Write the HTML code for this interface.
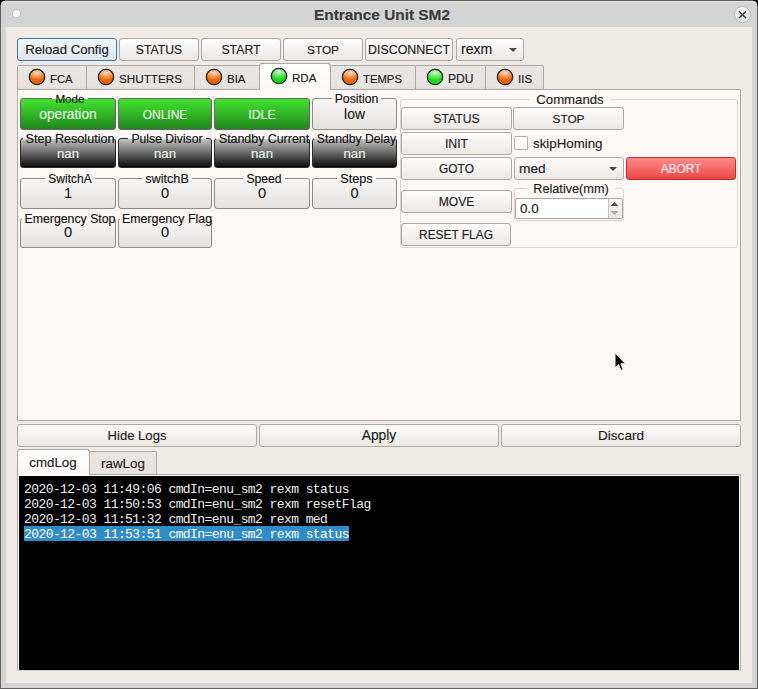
<!DOCTYPE html>
<html><head><meta charset="utf-8">
<style>
*{box-sizing:border-box;margin:0;padding:0}
html,body{width:758px;height:689px;overflow:hidden;background:#626262;font-family:"Liberation Sans",sans-serif;color:#1c1c1c}
.a{position:absolute}
.t{line-height:normal;white-space:nowrap;-webkit-text-stroke:0.15px currentColor}
.log{font-family:"Liberation Mono",monospace;font-size:13px;letter-spacing:-0.58px;-webkit-text-stroke:0}
</style></head><body>
<div class="a" style="left:0px;top:0px;width:5px;height:5px;background:#000"></div>
<div class="a" style="left:753px;top:0px;width:5px;height:5px;background:#000"></div>
<div class="a" style="left:1px;top:1px;width:756px;height:687px;background:#d4d4d4;border-radius:4px 4px 0 0;box-shadow:inset 0 1px 0 #e4e4e4"></div>
<div class="a" style="left:6px;top:27px;width:746px;height:656px;background:#efebe7"></div>
<div class="a" style="left:12.5px;top:10.3px;width:7px;height:7px;border-radius:50%;background:#f8f8f8;box-shadow:0 0 0 1px #c4c4c4"></div>
<div class="a" style="left:734px;top:6px;width:17px;height:17px;border-radius:50%;background:linear-gradient(#f4f4f4,#dedede);border:1px solid #bcbcbc"></div>
<svg class="a" style="left:734px;top:6px" width="17" height="17" viewBox="0 0 17 17"><path d="M5 5.2 L12 12 M12 5.2 L5 12" stroke="#3c3c3c" stroke-width="1.35"/></svg>
<div class="a" style="left:17px;top:38px;width:100px;height:23px;border:1px solid #3a78a8;border-radius:3px;background:linear-gradient(#f3f6f9,#dfe5ea)"></div>
<div class="a" style="left:119px;top:38px;width:80px;height:23px;border:1px solid #aba8a5;border-radius:3px;background:linear-gradient(#fdfdfd,#ebe8e5);"></div>
<div class="a" style="left:201px;top:38px;width:80px;height:23px;border:1px solid #aba8a5;border-radius:3px;background:linear-gradient(#fdfdfd,#ebe8e5);"></div>
<div class="a" style="left:283px;top:38px;width:80px;height:23px;border:1px solid #aba8a5;border-radius:3px;background:linear-gradient(#fdfdfd,#ebe8e5);"></div>
<div class="a" style="left:365px;top:38px;width:88px;height:23px;border:1px solid #aba8a5;border-radius:3px;background:linear-gradient(#fdfdfd,#ebe8e5);"></div>
<div class="a" style="left:456px;top:38px;width:68px;height:23px;border:1px solid #aba8a5;border-radius:3px;background:linear-gradient(#fdfdfd,#ebe8e5);"></div>
<svg class="a" style="left:509px;top:48px" width="9" height="5"><path d="M0 0 L8 0 L4 4 Z" fill="#4a4a4a"/></svg>
<div class="a" style="left:17px;top:65px;width:70px;height:25px;border:1px solid #aba8a5;border-bottom:none;border-radius:2px 2px 0 0;background:linear-gradient(#e9e6e3 0,#e6e3e0 85%,#dcd9d6 100%)"></div>
<div class="a" style="left:86px;top:65px;width:109px;height:25px;border:1px solid #aba8a5;border-bottom:none;border-radius:2px 2px 0 0;background:linear-gradient(#e9e6e3 0,#e6e3e0 85%,#dcd9d6 100%)"></div>
<div class="a" style="left:194px;top:65px;width:66px;height:25px;border:1px solid #aba8a5;border-bottom:none;border-radius:2px 2px 0 0;background:linear-gradient(#e9e6e3 0,#e6e3e0 85%,#dcd9d6 100%)"></div>
<div class="a" style="left:330px;top:65px;width:86px;height:25px;border:1px solid #aba8a5;border-bottom:none;border-radius:2px 2px 0 0;background:linear-gradient(#e9e6e3 0,#e6e3e0 85%,#dcd9d6 100%)"></div>
<div class="a" style="left:415px;top:65px;width:71px;height:25px;border:1px solid #aba8a5;border-bottom:none;border-radius:2px 2px 0 0;background:linear-gradient(#e9e6e3 0,#e6e3e0 85%,#dcd9d6 100%)"></div>
<div class="a" style="left:485px;top:65px;width:59px;height:25px;border:1px solid #aba8a5;border-bottom:none;border-radius:2px 2px 0 0;background:linear-gradient(#e9e6e3 0,#e6e3e0 85%,#dcd9d6 100%)"></div>
<div class="a" style="left:17px;top:89px;width:724px;height:332px;border:1px solid #aba8a5;background:#fbf8f5;box-shadow:inset 0 0 0 1px rgba(255,255,255,.3)"></div>
<div class="a" style="left:259px;top:63px;width:72px;height:27px;border:1px solid #aba8a5;border-bottom:none;border-radius:3px 3px 0 0;background:linear-gradient(#ffffff,#fbf8f5)"></div>
<div class="a" style="left:29px;top:69px;width:16px;height:16px;border-radius:50%;background:radial-gradient(ellipse 75% 55% at 50% 18%,rgba(255,228,205,.95) 0,rgba(255,255,255,0) 100%),#ee6200;box-shadow:0 0 0 0.3px #202020;border:1.3px solid #262626"></div>
<div class="a" style="left:98px;top:69px;width:16px;height:16px;border-radius:50%;background:radial-gradient(ellipse 75% 55% at 50% 18%,rgba(255,228,205,.95) 0,rgba(255,255,255,0) 100%),#ee6200;box-shadow:0 0 0 0.3px #202020;border:1.3px solid #262626"></div>
<div class="a" style="left:206px;top:69px;width:16px;height:16px;border-radius:50%;background:radial-gradient(ellipse 75% 55% at 50% 18%,rgba(255,228,205,.95) 0,rgba(255,255,255,0) 100%),#ee6200;box-shadow:0 0 0 0.3px #202020;border:1.3px solid #262626"></div>
<div class="a" style="left:342px;top:69px;width:16px;height:16px;border-radius:50%;background:radial-gradient(ellipse 75% 55% at 50% 18%,rgba(255,228,205,.95) 0,rgba(255,255,255,0) 100%),#ee6200;box-shadow:0 0 0 0.3px #202020;border:1.3px solid #262626"></div>
<div class="a" style="left:427px;top:69px;width:16px;height:16px;border-radius:50%;background:radial-gradient(ellipse 75% 55% at 50% 18%,rgba(215,255,215,.95) 0,rgba(255,255,255,0) 100%),#18dc18;box-shadow:0 0 0 0.3px #202020;border:1.3px solid #262626"></div>
<div class="a" style="left:497px;top:69px;width:16px;height:16px;border-radius:50%;background:radial-gradient(ellipse 75% 55% at 50% 18%,rgba(255,228,205,.95) 0,rgba(255,255,255,0) 100%),#ee6200;box-shadow:0 0 0 0.3px #202020;border:1.3px solid #262626"></div>
<div class="a" style="left:271px;top:68px;width:16px;height:16px;border-radius:50%;background:radial-gradient(ellipse 75% 55% at 50% 18%,rgba(215,255,215,.95) 0,rgba(255,255,255,0) 100%),#18dc18;box-shadow:0 0 0 0.3px #202020;border:1.3px solid #262626"></div>
<div class="a" style="left:20px;top:98px;width:96px;height:32px;border:1px solid #6c5e6c;border-radius:3px;background:linear-gradient(#42e42f,#1f861b)"></div>
<div class="a" style="left:118px;top:98px;width:94px;height:32px;border:1px solid #6c5e6c;border-radius:3px;background:linear-gradient(#42e42f,#1f861b)"></div>
<div class="a" style="left:214px;top:98px;width:96px;height:32px;border:1px solid #6c5e6c;border-radius:3px;background:linear-gradient(#42e42f,#1f861b)"></div>
<div class="a" style="left:312px;top:98px;width:85px;height:32px;border:1px solid #8e8b88;border-radius:3px;background:linear-gradient(#f8f7f6,#e4e2df)"></div>
<div class="a" style="left:20px;top:138px;width:96px;height:30px;border:1px solid #2a2a2a;border-radius:3px;background:linear-gradient(#c4c4c4,#0a0a0a)"></div>
<div class="a" style="left:118px;top:138px;width:94px;height:30px;border:1px solid #2a2a2a;border-radius:3px;background:linear-gradient(#c4c4c4,#0a0a0a)"></div>
<div class="a" style="left:214px;top:138px;width:96px;height:30px;border:1px solid #2a2a2a;border-radius:3px;background:linear-gradient(#c4c4c4,#0a0a0a)"></div>
<div class="a" style="left:312px;top:138px;width:85px;height:30px;border:1px solid #2a2a2a;border-radius:3px;background:linear-gradient(#c4c4c4,#0a0a0a)"></div>
<div class="a" style="left:20px;top:178px;width:96px;height:31px;border:1px solid #8e8b88;border-radius:3px;background:linear-gradient(#f8f7f6,#e4e2df)"></div>
<div class="a" style="left:118px;top:178px;width:94px;height:31px;border:1px solid #8e8b88;border-radius:3px;background:linear-gradient(#f8f7f6,#e4e2df)"></div>
<div class="a" style="left:214px;top:178px;width:96px;height:31px;border:1px solid #8e8b88;border-radius:3px;background:linear-gradient(#f8f7f6,#e4e2df)"></div>
<div class="a" style="left:312px;top:178px;width:85px;height:31px;border:1px solid #8e8b88;border-radius:3px;background:linear-gradient(#f8f7f6,#e4e2df)"></div>
<div class="a" style="left:20px;top:218px;width:96px;height:30px;border:1px solid #8e8b88;border-radius:3px;background:linear-gradient(#f8f7f6,#e4e2df)"></div>
<div class="a" style="left:118px;top:218px;width:94px;height:30px;border:1px solid #8e8b88;border-radius:3px;background:linear-gradient(#f8f7f6,#e4e2df)"></div>
<div class="a" style="left:400px;top:99px;width:338px;height:149px;border:1px solid #d8d5d2;border-radius:3px"></div>
<div class="a" style="left:401px;top:107px;width:111px;height:23px;border:1px solid #aba8a5;border-radius:3px;background:linear-gradient(#fdfdfd,#ebe8e5);"></div>
<div class="a" style="left:513px;top:107px;width:111px;height:23px;border:1px solid #aba8a5;border-radius:3px;background:linear-gradient(#fdfdfd,#ebe8e5);"></div>
<div class="a" style="left:401px;top:132px;width:111px;height:23px;border:1px solid #aba8a5;border-radius:3px;background:linear-gradient(#fdfdfd,#ebe8e5);"></div>
<div class="a" style="left:401px;top:157px;width:111px;height:23px;border:1px solid #aba8a5;border-radius:3px;background:linear-gradient(#fdfdfd,#ebe8e5);"></div>
<div class="a" style="left:401px;top:190px;width:111px;height:23px;border:1px solid #aba8a5;border-radius:3px;background:linear-gradient(#fdfdfd,#ebe8e5);"></div>
<div class="a" style="left:401px;top:223px;width:110px;height:23px;border:1px solid #aba8a5;border-radius:3px;background:linear-gradient(#fdfdfd,#ebe8e5);"></div>
<div class="a" style="left:514px;top:136px;width:14px;height:14px;border:1px solid #b6b2ae;border-radius:1px;background:#fff"></div>
<div class="a" style="left:514px;top:157px;width:110px;height:23px;border:1px solid #aba8a5;border-radius:3px;background:linear-gradient(#fdfdfd,#ebe8e5);"></div>
<svg class="a" style="left:609px;top:167px" width="9" height="5"><path d="M0 0 L8 0 L4 4 Z" fill="#4a4a4a"/></svg>
<div class="a" style="left:626px;top:157px;width:110px;height:23px;border:1px solid #c22a2a;border-radius:3px;background:linear-gradient(#ff8a8a,#ec4646)"></div>
<div class="a" style="left:514px;top:188px;width:110px;height:33px;border:1px solid #d8d5d2;border-radius:3px"></div>
<div class="a" style="left:515px;top:198px;width:108px;height:21px;border:1px solid #aba8a5;border-radius:2px;background:#fff"></div>
<div class="a" style="left:608px;top:199px;width:14px;height:19px;border-left:1px solid #c4c1be;border-radius:0 2px 2px 0;background:linear-gradient(#f8f7f6,#e9e6e3)"></div>
<svg class="a" style="left:610px;top:201px" width="10" height="15"><path d="M0.5 5 L8.5 5 L4.5 1 Z" fill="#585858"/><path d="M0.5 10 L8.5 10 L4.5 14 Z" fill="#a8a8a8"/></svg>
<div class="a" style="left:17px;top:424px;width:240px;height:23px;border:1px solid #aba8a5;border-radius:3px;background:linear-gradient(#fdfdfd,#ebe8e5);"></div>
<div class="a" style="left:259px;top:424px;width:240px;height:23px;border:1px solid #aba8a5;border-radius:3px;background:linear-gradient(#fdfdfd,#ebe8e5);"></div>
<div class="a" style="left:501px;top:424px;width:240px;height:23px;border:1px solid #aba8a5;border-radius:3px;background:linear-gradient(#fdfdfd,#ebe8e5);"></div>
<div class="a" style="left:89px;top:451px;width:68px;height:25px;border:1px solid #aba8a5;border-bottom:none;border-radius:2px 2px 0 0;background:linear-gradient(#e9e6e3 0,#e6e3e0 85%,#dcd9d6 100%)"></div>
<div class="a" style="left:17px;top:474px;width:724px;height:197px;border:1px solid #aba8a5;border-bottom-color:#d4d1ce;background:#000;box-shadow:inset 1px 1px 0 #fff,inset -1px 0 0 #fff"></div>
<div class="a" style="left:17px;top:449px;width:73px;height:26px;border:1px solid #aba8a5;border-bottom:none;border-radius:3px 3px 0 0;background:linear-gradient(#ffffff,#fbf8f5)"></div>
<div class="a" style="left:24px;top:526px;width:325px;height:15px;background:#308cc6"></div>
<svg class="a" style="left:614px;top:352px" width="13" height="20" viewBox="0 0 13 20"><path d="M1 1 L1 16 L4.5 12.5 L7 18.5 L9.2 17.5 L6.8 11.8 L11.5 11.8 Z" fill="#000" stroke="#fff" stroke-width="1"/></svg>
<div class="a t" style="top:6px;font-size:15.4px;color:#3b3b3b;font-weight:bold;left:232px;width:300px;text-align:center;">Entrance Unit SM2</div>
<div class="a t" style="top:42px;font-size:13.2px;color:#1c1c1c;font-weight:normal;left:-83px;width:300px;text-align:center;">Reload Config</div>
<div class="a t" style="top:43px;font-size:12.2px;color:#1c1c1c;font-weight:normal;left:9.0px;width:300px;text-align:center;">STATUS</div>
<div class="a t" style="top:43px;font-size:12.3px;color:#1c1c1c;font-weight:normal;left:91.0px;width:300px;text-align:center;">START</div>
<div class="a t" style="top:43px;font-size:11.8px;color:#1c1c1c;font-weight:normal;left:173.0px;width:300px;text-align:center;">STOP</div>
<div class="a t" style="top:43px;font-size:12.4px;color:#1c1c1c;font-weight:normal;left:259.0px;width:300px;text-align:center;">DISCONNECT</div>
<div class="a t" style="top:41px;font-size:14.1px;color:#1c1c1c;font-weight:normal;left:461px;">rexm</div>
<div class="a t" style="top:73px;font-size:11.3px;color:#1c1c1c;font-weight:normal;left:50px;">FCA</div>
<div class="a t" style="top:72px;font-size:11.7px;color:#1c1c1c;font-weight:normal;left:119px;">SHUTTERS</div>
<div class="a t" style="top:73px;font-size:11.5px;color:#1c1c1c;font-weight:normal;left:227px;">BIA</div>
<div class="a t" style="top:73px;font-size:11.3px;color:#1c1c1c;font-weight:normal;left:363px;">TEMPS</div>
<div class="a t" style="top:72px;font-size:12.1px;color:#1c1c1c;font-weight:normal;left:448px;">PDU</div>
<div class="a t" style="top:72px;font-size:11.6px;color:#1c1c1c;font-weight:normal;left:518px;">IIS</div>
<div class="a t" style="top:71px;font-size:11.6px;color:#1c1c1c;font-weight:normal;left:292px;">RDA</div>
<div class="a t" style="top:107px;font-size:13.8px;color:#eaf6ea;font-weight:normal;left:-82.0px;width:300px;text-align:center;">operation</div>
<div class="a t" style="top:92px;font-size:11.7px;color:#111;font-weight:normal;left:-80.0px;width:300px;text-align:center;"><span style="padding:0 3px;background:linear-gradient(#fbf8f5 0,#fbf8f5 7px,transparent 7px)">Mode</span></div>
<div class="a t" style="top:108px;font-size:12.0px;color:#eaf6ea;font-weight:normal;left:15.0px;width:300px;text-align:center;">ONLINE</div>
<div class="a t" style="top:108px;font-size:12.4px;color:#eaf6ea;font-weight:normal;left:112.0px;width:300px;text-align:center;">IDLE</div>
<div class="a t" style="top:106px;font-size:13.9px;color:#1c1c1c;font-weight:normal;left:204.5px;width:300px;text-align:center;">low</div>
<div class="a t" style="top:92px;font-size:12.3px;color:#111;font-weight:normal;left:206.5px;width:300px;text-align:center;"><span style="padding:0 3px;background:linear-gradient(#fbf8f5 0,#fbf8f5 7px,transparent 7px)">Position</span></div>
<div class="a t" style="top:146px;font-size:13.2px;color:#eaf6ea;font-weight:normal;left:-82.0px;width:300px;text-align:center;">nan</div>
<div class="a t" style="top:132px;font-size:12.6px;color:#111;font-weight:normal;left:-80.0px;width:300px;text-align:center;"><span style="padding:0 3px;background:linear-gradient(#fbf8f5 0,#fbf8f5 7px,transparent 7px)">Step Resolution</span></div>
<div class="a t" style="top:146px;font-size:13.2px;color:#eaf6ea;font-weight:normal;left:15.0px;width:300px;text-align:center;">nan</div>
<div class="a t" style="top:132px;font-size:12.2px;color:#111;font-weight:normal;left:17.0px;width:300px;text-align:center;"><span style="padding:0 3px;background:linear-gradient(#fbf8f5 0,#fbf8f5 7px,transparent 7px)">Pulse Divisor</span></div>
<div class="a t" style="top:146px;font-size:13.2px;color:#eaf6ea;font-weight:normal;left:112.0px;width:300px;text-align:center;">nan</div>
<div class="a t" style="top:132px;font-size:12.4px;color:#111;font-weight:normal;left:114.0px;width:300px;text-align:center;"><span style="padding:0 3px;background:linear-gradient(#fbf8f5 0,#fbf8f5 7px,transparent 7px)">Standby Current</span></div>
<div class="a t" style="top:146px;font-size:13.2px;color:#eaf6ea;font-weight:normal;left:204.5px;width:300px;text-align:center;">nan</div>
<div class="a t" style="top:132px;font-size:12.2px;color:#111;font-weight:normal;left:206.5px;width:300px;text-align:center;"><span style="padding:0 3px;background:linear-gradient(#fbf8f5 0,#fbf8f5 7px,transparent 7px)">Standby Delay</span></div>
<div class="a t" style="top:185px;font-size:13.9px;color:#1c1c1c;font-weight:normal;left:-82.0px;width:300px;text-align:center;">1</div>
<div class="a t" style="top:172px;font-size:12.0px;color:#111;font-weight:normal;left:-80.0px;width:300px;text-align:center;"><span style="padding:0 3px;background:linear-gradient(#fbf8f5 0,#fbf8f5 7px,transparent 7px)">SwitchA</span></div>
<div class="a t" style="top:185px;font-size:14.6px;color:#1c1c1c;font-weight:normal;left:15.0px;width:300px;text-align:center;">0</div>
<div class="a t" style="top:172px;font-size:12.7px;color:#111;font-weight:normal;left:17.0px;width:300px;text-align:center;"><span style="padding:0 3px;background:linear-gradient(#fbf8f5 0,#fbf8f5 7px,transparent 7px)">switchB</span></div>
<div class="a t" style="top:185px;font-size:14.6px;color:#1c1c1c;font-weight:normal;left:112.0px;width:300px;text-align:center;">0</div>
<div class="a t" style="top:172px;font-size:12.2px;color:#111;font-weight:normal;left:114.0px;width:300px;text-align:center;"><span style="padding:0 3px;background:linear-gradient(#fbf8f5 0,#fbf8f5 7px,transparent 7px)">Speed</span></div>
<div class="a t" style="top:185px;font-size:14.6px;color:#1c1c1c;font-weight:normal;left:204.5px;width:300px;text-align:center;">0</div>
<div class="a t" style="top:172px;font-size:12.7px;color:#111;font-weight:normal;left:206.5px;width:300px;text-align:center;"><span style="padding:0 3px;background:linear-gradient(#fbf8f5 0,#fbf8f5 7px,transparent 7px)">Steps</span></div>
<div class="a t" style="top:224px;font-size:14.6px;color:#1c1c1c;font-weight:normal;left:-82.0px;width:300px;text-align:center;">0</div>
<div class="a t" style="top:212px;font-size:12.3px;color:#111;font-weight:normal;left:-80.0px;width:300px;text-align:center;"><span style="padding:0 3px;background:linear-gradient(#fbf8f5 0,#fbf8f5 7px,transparent 7px)">Emergency Stop</span></div>
<div class="a t" style="top:224px;font-size:14.6px;color:#1c1c1c;font-weight:normal;left:15.0px;width:300px;text-align:center;">0</div>
<div class="a t" style="top:212px;font-size:12.4px;color:#111;font-weight:normal;left:17.0px;width:300px;text-align:center;"><span style="padding:0 3px;background:linear-gradient(#fbf8f5 0,#fbf8f5 7px,transparent 7px)">Emergency Flag</span></div>
<div class="a t" style="top:92px;font-size:13.2px;color:#1c1c1c;font-weight:normal;left:420px;width:300px;text-align:center;"><span style="padding:0 6px;background:linear-gradient(#fbf8f5 0,#fbf8f5 8px,transparent 8px)">Commands</span></div>
<div class="a t" style="top:112px;font-size:12.2px;color:#1c1c1c;font-weight:normal;left:306.5px;width:300px;text-align:center;">STATUS</div>
<div class="a t" style="top:112px;font-size:11.8px;color:#1c1c1c;font-weight:normal;left:418.5px;width:300px;text-align:center;">STOP</div>
<div class="a t" style="top:137px;font-size:12.3px;color:#1c1c1c;font-weight:normal;left:306.5px;width:300px;text-align:center;">INIT</div>
<div class="a t" style="top:162px;font-size:11.9px;color:#1c1c1c;font-weight:normal;left:306.5px;width:300px;text-align:center;">GOTO</div>
<div class="a t" style="top:195px;font-size:12.1px;color:#1c1c1c;font-weight:normal;left:306.5px;width:300px;text-align:center;">MOVE</div>
<div class="a t" style="top:228px;font-size:11.9px;color:#1c1c1c;font-weight:normal;left:306.0px;width:300px;text-align:center;">RESET FLAG</div>
<div class="a t" style="top:136px;font-size:13.3px;color:#1c1c1c;font-weight:normal;left:533px;">skipHoming</div>
<div class="a t" style="top:161px;font-size:13.7px;color:#1c1c1c;font-weight:normal;left:519px;">med</div>
<div class="a t" style="top:162px;font-size:11.9px;color:#fff0f0;font-weight:normal;left:531px;width:300px;text-align:center;">ABORT</div>
<div class="a t" style="top:182px;font-size:12.7px;color:#1c1c1c;font-weight:normal;left:421px;width:300px;text-align:center;"><span style="padding:0 6px;background:linear-gradient(#fbf8f5 0,#fbf8f5 7px,transparent 7px)">Relative(mm)</span></div>
<div class="a t" style="top:201px;font-size:13.4px;color:#1c1c1c;font-weight:normal;left:520px;">0.0</div>
<div class="a t" style="top:428px;font-size:13.1px;color:#1c1c1c;font-weight:normal;left:-13.0px;width:300px;text-align:center;">Hide Logs</div>
<div class="a t" style="top:428px;font-size:13.8px;color:#1c1c1c;font-weight:normal;left:229.0px;width:300px;text-align:center;">Apply</div>
<div class="a t" style="top:428px;font-size:13.6px;color:#1c1c1c;font-weight:normal;left:471.0px;width:300px;text-align:center;">Discard</div>
<div class="a t" style="top:456px;font-size:13.4px;color:#1c1c1c;font-weight:normal;left:-27px;width:300px;text-align:center;">rawLog</div>
<div class="a t" style="top:455px;font-size:13.3px;color:#1c1c1c;font-weight:normal;left:-97px;width:300px;text-align:center;">cmdLog</div>
<div class="a t log" style="left:24px;top:482px;color:#eeeeee">2020-12-03 11:49:06 cmdIn=enu_sm2 rexm status</div>
<div class="a t log" style="left:24px;top:497px;color:#eeeeee">2020-12-03 11:50:53 cmdIn=enu_sm2 rexm resetFlag</div>
<div class="a t log" style="left:24px;top:512px;color:#eeeeee">2020-12-03 11:51:32 cmdIn=enu_sm2 rexm med</div>
<div class="a t log" style="left:24px;top:527px;color:#ffffff">2020-12-03 11:53:51 cmdIn=enu_sm2 rexm status</div>
</body></html>
